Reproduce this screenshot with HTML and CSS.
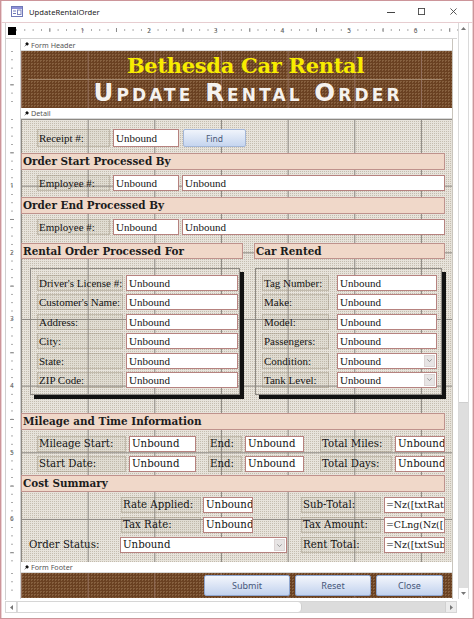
FILE: index.html
```html
<!DOCTYPE html>
<html lang="en">
<head>
<meta charset="utf-8">
<title>UpdateRentalOrder</title>
<link rel="stylesheet" href="styles.css">
</head>
<body>
<div class="window">
  <div class="titlebar">
    <svg class="app-icon" width="12" height="11" viewBox="0 0 12 11">
      <rect x="0.5" y="0.5" width="11" height="10" fill="#fff" stroke="#6f78b8"/>
      <rect x="1" y="1" width="10" height="2" fill="#8d8fd6"/>
      <rect x="2" y="4.5" width="3" height="1" fill="#6f78b8"/>
      <rect x="2" y="7" width="3" height="1" fill="#6f78b8"/>
      <rect x="6.5" y="4" width="3.5" height="4.5" fill="none" stroke="#6f78b8" stroke-width="0.9"/>
    </svg>
    <span class="title">UpdateRentalOrder</span>
    <div class="win-controls">
      <svg class="wc wc-min" width="8" height="8" viewBox="0 0 8 8"><path d="M0 4.5h8" stroke="#444" stroke-width="1"/></svg>
      <svg class="wc wc-max" width="8" height="8" viewBox="0 0 8 8"><rect x="0.5" y="0.5" width="7" height="7" fill="none" stroke="#444"/></svg>
      <svg class="wc wc-close" width="8" height="8" viewBox="0 0 8 8"><path d="M0.5 0.5l7 7M7.5 0.5l-7 7" stroke="#444"/></svg>
    </div>
  </div>

  <div class="client">
    <div class="designer">
      <div class="hruler-row">
        <div class="selector"><span class="select-box"></span></div>
        <div class="hruler"><span>1</span><span>2</span><span>3</span><span>4</span><span>5</span><span>6</span></div>
      </div>
      <div class="design-body">
        <div class="vruler">
          <div class="vr-bar vr-bar-top"></div>
          <div class="vr-seg vr-header"></div>
          <div class="vr-bar"></div>
          <div class="vr-seg vr-detail"><span>1</span><span>2</span><span>3</span><span>4</span><span>5</span><span>6</span></div>
          <div class="vr-bar"></div>
          <div class="vr-seg vr-footer"></div>
        </div>
        <div class="sections">
          <div class="sec-bar sec-bar-top"><svg class="pin" width="5" height="5" viewBox="0 0 5 5"><path d="M0 5L2 2.6L1.2 1.8L3 0L5 2L3.2 3.8L2.4 3Z" fill="#111"/></svg>Form Header</div>
          <div class="form-header">
            <div class="h-title">Bethesda Car Rental</div>
            <div class="h-sub">Update Rental Order</div>
          </div>
          <div class="sec-bar"><svg class="pin" width="5" height="5" viewBox="0 0 5 5"><path d="M0 5L2 2.6L1.2 1.8L3 0L5 2L3.2 3.8L2.4 3Z" fill="#111"/></svg>Detail</div>

          <div class="detail">
            <div class="row row-receipt">
              <div class="lbl lbl-emp">Receipt #:</div>
              <div class="tb tb-id">Unbound</div>
              <div class="btn btn-find">Find</div>
            </div>

            <div class="band mt6">Order Start Processed By</div>
            <div class="row mt5">
              <div class="lbl lbl-emp">Employee #:</div>
              <div class="tb tb-id">Unbound</div>
              <div class="tb tb-name">Unbound</div>
            </div>

            <div class="band mt6">Order End Processed By</div>
            <div class="row mt5">
              <div class="lbl lbl-emp">Employee #:</div>
              <div class="tb tb-id">Unbound</div>
              <div class="tb tb-name">Unbound</div>
            </div>

            <div class="band-pair mt8">
              <div class="band band-rental">Rental Order Processed For</div>
              <div class="band band-car">Car Rented</div>
            </div>

            <div class="boxes mt9">
              <div class="box box-customer">
                <div class="row"><div class="lbl lbl-cust">Driver's License #:</div><div class="tb tb-cust">Unbound</div></div>
                <div class="row"><div class="lbl lbl-cust">Customer's Name:</div><div class="tb tb-cust">Unbound</div></div>
                <div class="row"><div class="lbl lbl-cust">Address:</div><div class="tb tb-cust">Unbound</div></div>
                <div class="row"><div class="lbl lbl-cust">City:</div><div class="tb tb-cust">Unbound</div></div>
                <div class="row"><div class="lbl lbl-cust">State:</div><div class="tb tb-cust">Unbound</div></div>
                <div class="row"><div class="lbl lbl-cust">ZIP Code:</div><div class="tb tb-cust">Unbound</div></div>
              </div>
              <div class="box box-car">
                <div class="row"><div class="lbl lbl-car">Tag Number:</div><div class="tb tb-car">Unbound</div></div>
                <div class="row"><div class="lbl lbl-car">Make:</div><div class="tb tb-car">Unbound</div></div>
                <div class="row"><div class="lbl lbl-car">Model:</div><div class="tb tb-car">Unbound</div></div>
                <div class="row"><div class="lbl lbl-car">Passengers:</div><div class="tb tb-car">Unbound</div></div>
                <div class="row"><div class="lbl lbl-car">Condition:</div><div class="tb combo tb-car"><span class="val">Unbound</span><span class="dd"><svg width="5" height="3" viewBox="0 0 5 3"><path d="M0.3 0.3L2.5 2.6L4.7 0.3" fill="none" stroke="#8a8a8a" stroke-width="0.8"/></svg></span></div></div>
                <div class="row"><div class="lbl lbl-car">Tank Level:</div><div class="tb combo tb-car"><span class="val">Unbound</span><span class="dd"><svg width="5" height="3" viewBox="0 0 5 3"><path d="M0.3 0.3L2.5 2.6L4.7 0.3" fill="none" stroke="#8a8a8a" stroke-width="0.8"/></svg></span></div></div>
              </div>
            </div>

            <div class="band mt18">Mileage and Time Information</div>
            <div class="row cs mt6">
              <div class="lbl lbl-mile">Mileage Start:</div>
              <div class="tb tb-mile">Unbound</div>
              <div class="lbl lbl-end">End:</div>
              <div class="tb tb-end">Unbound</div>
              <div class="lbl lbl-total">Total Miles:</div>
              <div class="tb tb-total">Unbound</div>
            </div>
            <div class="row cs mt4">
              <div class="lbl lbl-mile">Start Date:</div>
              <div class="tb tb-mile">Unbound</div>
              <div class="lbl lbl-end">End:</div>
              <div class="tb tb-end">Unbound</div>
              <div class="lbl lbl-total">Total Days:</div>
              <div class="tb tb-total">Unbound</div>
            </div>

            <div class="band mt3">Cost Summary</div>
            <div class="row cs mt5">
              <div class="lbl lbl-rate">Rate Applied:</div>
              <div class="tb tb-rate">Unbound</div>
              <div class="lbl lbl-sum">Sub-Total:</div>
              <div class="tb tb-sum">=Nz([txtRat</div>
            </div>
            <div class="row cs mt4">
              <div class="lbl lbl-rate">Tax Rate:</div>
              <div class="tb tb-rate">Unbound</div>
              <div class="lbl lbl-sum">Tax Amount:</div>
              <div class="tb tb-sum">=CLng(Nz([</div>
            </div>
            <div class="row cs mt4">
              <div class="lbl lbl-status">Order Status:</div>
              <div class="tb combo combo-status"><span class="val">Unbound</span><span class="dd"><svg width="5" height="3" viewBox="0 0 5 3"><path d="M0.3 0.3L2.5 2.6L4.7 0.3" fill="none" stroke="#8a8a8a" stroke-width="0.8"/></svg></span></div>
              <div class="lbl lbl-rent">Rent Total:</div>
              <div class="tb tb-sum">=Nz([txtSub</div>
            </div>
          </div>

          <div class="sec-bar"><svg class="pin" width="5" height="5" viewBox="0 0 5 5"><path d="M0 5L2 2.6L1.2 1.8L3 0L5 2L3.2 3.8L2.4 3Z" fill="#111"/></svg>Form Footer</div>
          <div class="form-footer">
            <div class="cmd cmd-submit">Submit</div>
            <div class="cmd cmd-reset">Reset</div>
            <div class="cmd cmd-close">Close</div>
          </div>
        </div>
      </div>
    </div>
    <div class="vscroll">
      <div class="vs-arrow"><svg width="5" height="3" viewBox="0 0 5 3"><path d="M0 3L2.5 0L5 3Z" fill="#777"/></svg></div>
      <div class="vs-thumb"></div>
      <div class="vs-track"></div>
      <div class="vs-arrow"><svg width="5" height="3" viewBox="0 0 5 3"><path d="M0 0L2.5 3L5 0Z" fill="#777"/></svg></div>
    </div>
  </div>

  <div class="hscroll">
    <div class="hs-arrow"><svg width="3" height="5" viewBox="0 0 3 5"><path d="M3 0L0 2.5L3 5Z" fill="#777"/></svg></div>
    <div class="hs-thumb"></div>
    <div class="hs-track"></div>
    <div class="hs-arrow hs-arrow-r"><svg width="3" height="5" viewBox="0 0 3 5"><path d="M0 0L3 2.5L0 5Z" fill="#777"/></svg></div>
  </div>
</div>
</body>
</html>
```

FILE: styles.css
```css
* { box-sizing: border-box; }

html, body {
  margin: 0;
  padding: 0;
  background: #fff;
}

body {
  width: 474px;
  height: 619px;
  overflow: hidden;
  font-family: "Noto Sans", "Liberation Sans", sans-serif;
}

.window {
  width: 474px;
  height: 619px;
  border: 1px solid #cc959a;
  box-shadow: inset 1px 0 0 #edd3d5, inset -1px 0 0 #edd3d5;
  background: #fff;
  display: flex;
  flex-direction: column;
}

/* ---------- title bar ---------- */
.titlebar {
  height: 22px;
  flex-shrink: 0;
  display: flex;
  align-items: center;
  border-bottom: 1px solid #e7cdd0;
}

.app-icon {
  margin-left: 10px;
  display: block;
}

.title {
  margin-left: 6px;
  font-size: 7.6px;
  color: #222;
  letter-spacing: 0.05px;
}

.win-controls {
  margin-left: auto;
  display: flex;
  align-items: center;
}

.wc { display: block; }
.wc-min { margin-right: 23px; }
.wc-max { margin-right: 25px; width: 7px; height: 7px; }
.wc-close { margin-right: 16px; width: 7px; height: 7px; }

/* ---------- client area ---------- */
.client {
  height: 577px;
  flex-shrink: 0;
  display: flex;
  padding-left: 4px;
}

.designer {
  width: 452px;
  border-left: 1px solid #cfcfcf;
  display: flex;
  flex-direction: column;
}

.hruler-row {
  height: 16px;
  display: flex;
  border-bottom: 1px solid #d4d4d4;
}

.selector {
  width: 15px;
  padding: 4px 0 0 2px;
}

.select-box {
  display: block;
  width: 8px;
  height: 8px;
  background: #000;
}

.hruler {
  flex: 1;
  display: flex;
  padding-left: 64.5px;
  background-image:
    linear-gradient(90deg, #8a8a8a 1px, transparent 1px),
    linear-gradient(90deg, #a5a5a5 1px, transparent 1px);
  background-size: 66.667px 4px, 8.333px 2px;
  background-position: 33.333px 5px, 0 6px;
  background-repeat: repeat-x;
}

.hruler span {
  width: 66.667px;
  flex-shrink: 0;
  font-size: 6.5px;
  line-height: 15px;
  color: #555;
}

.design-body {
  height: 560px;
  display: flex;
}

.vruler {
  width: 15px;
  border-right: 1px solid #cfcfcf;
  display: flex;
  flex-direction: column;
}

.vr-bar { height: 11px; flex-shrink: 0; }
.vr-bar-top { height: 12px; }

.vr-seg {
  flex-shrink: 0;
  background-image:
    linear-gradient(#8a8a8a 1px, transparent 1px),
    linear-gradient(#a5a5a5 1px, transparent 1px);
  background-size: 4px 66.667px, 2px 8.333px;
  background-position: 4px 33.333px, 5px 0;
  background-repeat: repeat-y;
}

.vr-header { height: 57px; }
.vr-footer { height: 25px; }

.vr-detail {
  height: 443px;
  display: flex;
  flex-direction: column;
  padding-top: 63px;
}

.vr-detail span {
  height: 66.667px;
  flex-shrink: 0;
  font-size: 6.5px;
  line-height: 7px;
  padding-left: 4px;
  color: #555;
}

.sections {
  width: 432px;
  display: flex;
  flex-direction: column;
  border-right: 1px solid #c9c5bd;
}

/* ---------- section bars ---------- */
.sec-bar {
  height: 11px;
  flex-shrink: 0;
  display: flex;
  align-items: center;
  padding-left: 3px;
  font-size: 7.2px;
  color: #555;
  background: #fff;
  border-bottom: 1px solid #d8d8d8;
}

.sec-bar-top { height: 12px; }

.pin {
  display: block;
  margin-right: 2px;
}

/* ---------- brown sections ---------- */
.form-header,
.form-footer {
  flex-shrink: 0;
  background-color: #6a4122;
  background-image:
    linear-gradient(90deg, #94705e 1px, transparent 1px),
    conic-gradient(#86603f 0 25%, transparent 0);
  background-size: 66.667px 100%, 3px 3px;
}

.form-header {
  height: 57px;
  display: flex;
  flex-direction: column;
}

.h-title {
  height: 29px;
  margin: 0 10px 0 7px;
  padding-left: 21px;
  border-bottom: 1px solid #a3866b;
  text-align: center;
  font-family: "DejaVu Serif", "Liberation Serif", serif;
  font-weight: bold;
  font-size: 21px;
  letter-spacing: -0.3px;
  line-height: 29px;
  color: #f8ec00;
}

.h-sub {
  height: 27px;
  margin: 0 10px 0 7px;
  padding-left: 26px;
  text-align: center;
  font-family: "DejaVu Sans", "Liberation Sans", sans-serif;
  font-weight: bold;
  font-variant: small-caps;
  font-size: 24.5px;
  letter-spacing: 3.1px;
  line-height: 26px;
  color: #f5f2ee;
}

/* ---------- detail ---------- */
.detail {
  height: 443px;
  flex-shrink: 0;
  padding-top: 10px;
  display: flex;
  flex-direction: column;
  background-color: #e7e3db;
  background-image:
    linear-gradient(90deg, #8d8983 1px, transparent 1px),
    linear-gradient(#8d8983 1px, transparent 1px),
    conic-gradient(#c4bdaf 0 25%, transparent 0);
  background-size: 66.667px 100%, 100% 66.667px, 2px 2px;
}

.mt3 { margin-top: 3px; }
.mt4 { margin-top: 4px; }
.mt5 { margin-top: 5px; }
.mt6 { margin-top: 6px; }
.mt8 { margin-top: 8px; }
.mt9 { margin-top: 9px; }
.mt18 { margin-top: 18px; }

.row {
  height: 16px;
  flex-shrink: 0;
  display: flex;
}

.row-receipt { height: 18px; }

.lbl, .tb {
  height: 100%;
  flex-shrink: 0;
  font-family: "Liberation Serif", "Times New Roman", serif;
  font-size: 11px;
  line-height: 14px;
  white-space: nowrap;
  overflow: hidden;
  color: #151515;
}

.row-receipt .lbl, .row-receipt .tb { line-height: 16px; }

.lbl {
  padding: 0 1px 0 1px;
  border: 1px solid rgba(150, 138, 118, 0.4);
  background: rgba(150, 138, 118, 0.08);
}

.tb {
  padding: 0 2px;
  background: #fff;
  border: 1px solid #b6827f;
}

.cs .lbl, .cs .tb {
  font-family: "DejaVu Serif", "Liberation Serif", serif;
  font-size: 10.2px;
  line-height: 14px;
}

.combo {
  display: flex;
  padding-right: 1px;
}

.combo .val { flex: 1; overflow: hidden; }

.combo .dd {
  width: 11px;
  margin: 1px 0;
  background: #e7e4e4;
  border: 1px solid #dcd4d4;
  display: flex;
  align-items: center;
  justify-content: center;
}

.btn {
  height: 100%;
  flex-shrink: 0;
  display: flex;
  align-items: center;
  justify-content: center;
  font-size: 8.5px;
  color: #4b5a78;
  background: linear-gradient(#f0f4fb, #c5d5ef);
  border: 1px solid #a4b7d8;
  border-radius: 2px;
}

.lbl-emp { margin-left: 16px; width: 73px; }
.tb-id { margin-left: 3px; width: 66px; }
.btn-find { margin-left: 4px; width: 63px; }
.tb-name { margin-left: 3px; width: 263px; }

/* bands */
.band {
  height: 17px;
  width: 424px;
  flex-shrink: 0;
  padding-left: 1px;
  background: #f0d8c9;
  border: 1px solid #bf928c;
  font-family: "DejaVu Serif", "Liberation Serif", serif;
  font-weight: bold;
  font-size: 10.4px;
  line-height: 15px;
  color: #1c1c1c;
  white-space: nowrap;
}

.band-pair {
  height: 16px;
  flex-shrink: 0;
  display: flex;
}

.band-pair .band { height: 16px; line-height: 14px; }
.band-rental { width: 222px; }
.band-car { margin-left: 11px; width: 191px; }

/* boxes */
.boxes {
  height: 127px;
  flex-shrink: 0;
  display: flex;
}

.box {
  height: 127px;
  border: 1px solid #8e8a84;
  box-shadow: 4px 4px 0 #121212;
  padding-top: 6px;
  display: flex;
  flex-direction: column;
  gap: 3.4px;
}

.box-customer { margin-left: 9px; width: 210px; }
.box-car { margin-left: 15px; width: 187px; }

.lbl-cust { margin-left: 6px; width: 86px; }
.tb-cust { margin-left: 3px; width: 112px; }
.lbl-car { margin-left: 6px; width: 67px; }
.tb-car { margin-left: 8px; width: 100px; }

/* mileage */
.lbl-mile { margin-left: 16px; width: 89px; }
.tb-mile { margin-left: 3px; width: 67px; }
.lbl-end { margin-left: 12px; width: 34px; }
.tb-end { margin-left: 3px; width: 59px; }
.lbl-total { margin-left: 16px; width: 72px; }
.tb-total { margin-left: 3px; width: 50px; }

/* cost */
.lbl-rate { margin-left: 100px; width: 80px; }
.tb-rate { margin-left: 2px; width: 50px; }
.lbl-sum { margin-left: 48px; width: 80px; }
.cs .tb-sum { margin-left: 3px; width: 61px; padding: 0 1px; font-size: 9.4px; }
.lbl-status { margin-left: 6px; width: 90px; border-color: transparent; background: transparent; }
.combo-status { margin-left: 3px; width: 167px; }
.lbl-rent { margin-left: 14px; width: 80px; }

/* ---------- footer ---------- */
.form-footer {
  height: 25px;
  display: flex;
  padding: 2px 0 2px 183px;
}

.cmd {
  height: 21px;
  flex-shrink: 0;
  display: flex;
  align-items: center;
  justify-content: center;
  font-size: 9px;
  color: #46577a;
  background: linear-gradient(#f3f6fc, #c2d2ee);
  border: 1px solid #8fa6cf;
  border-radius: 2px;
}

.cmd-submit { width: 86px; }
.cmd-reset { margin-left: 5px; width: 76px; }
.cmd-close { margin-left: 5px; width: 67px; }

/* ---------- scrollbars ---------- */
.vscroll {
  width: 11px;
  height: 576px;
  margin-left: 1px;
  display: flex;
  flex-direction: column;
  border-left: 1px solid #dadada;
  border-right: 1px solid #dadada;
  background: #dedede;
}

.vs-arrow {
  height: 11px;
  flex-shrink: 0;
  background: #fff;
  display: flex;
  align-items: center;
  justify-content: center;
}

.vs-thumb {
  height: 369px;
  flex-shrink: 0;
  background: #fff;
  border-bottom: 1px solid #cfcfcf;
}

.vs-track { flex: 1; }

.hscroll {
  height: 12px;
  flex-shrink: 0;
  margin: 1px 0 0 4px;
  width: 452px;
  display: flex;
  border: 1px solid #d6d6d6;
  background: #dcdcdc;
}

.hs-arrow {
  width: 11px;
  flex-shrink: 0;
  background: #fff;
  border-right: 1px solid #d6d6d6;
  display: flex;
  align-items: center;
  justify-content: center;
}

.hs-arrow-r {
  border-right: 0;
  border-left: 1px solid #d0d0d0;
  background: #ececec;
}

.hs-thumb {
  width: 284px;
  flex-shrink: 0;
  margin-left: 1px;
  background: #fff;
  border-right: 1px solid #cfcfcf;
  border-radius: 0 4px 4px 0;
}

.hs-track { flex: 1; }
```
